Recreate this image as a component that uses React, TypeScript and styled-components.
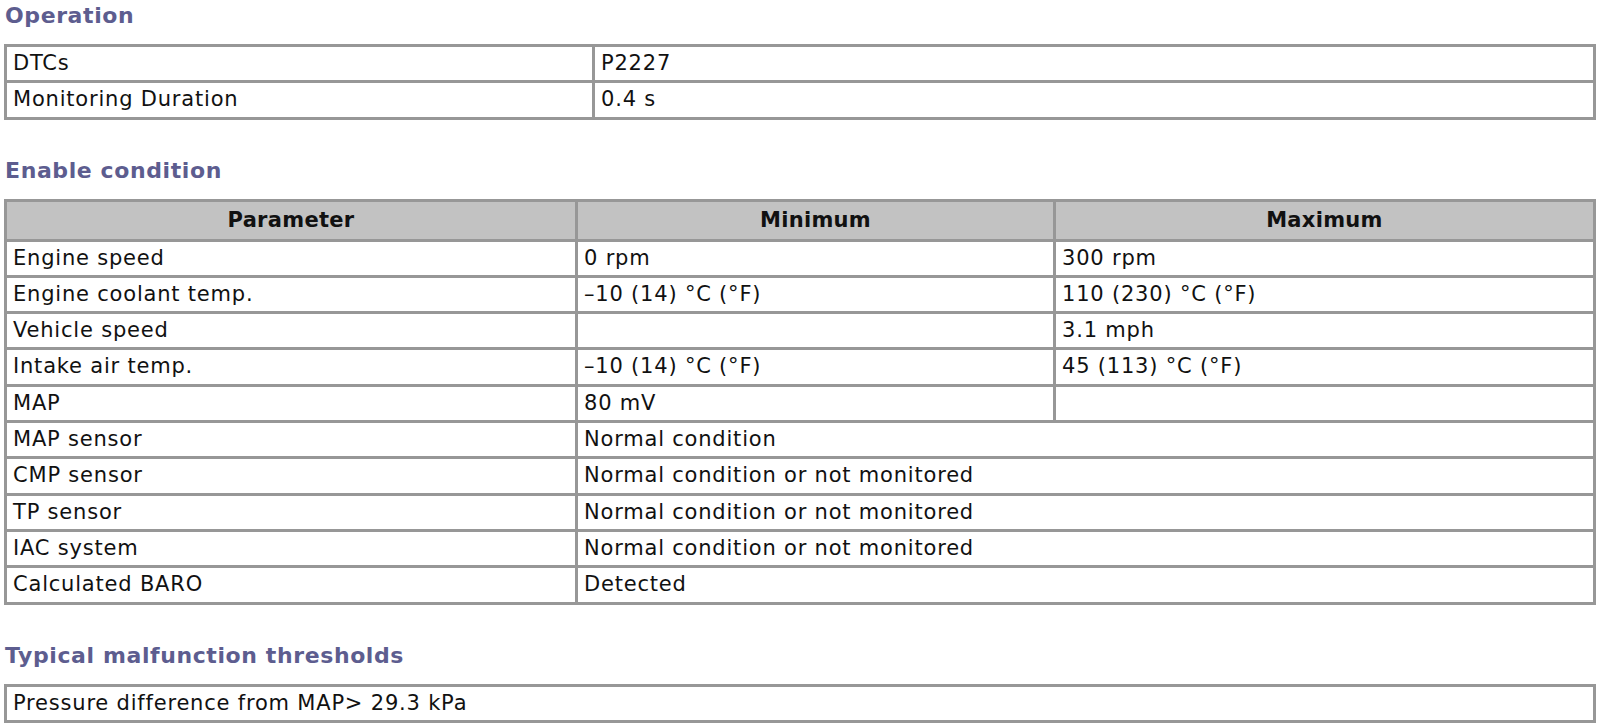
import React from "react";
import styled, { createGlobalStyle } from "styled-components";

const Global = createGlobalStyle`
  html, body { margin: 0; padding: 0; background: #ffffff; }
  body { font-family: "DejaVu Sans", Verdana, sans-serif; color: #000; }
`;

const Page = styled.div`
  padding: 4px 4px 0 4px;
`;

const Section = styled.section`
  & + & { margin-top: 39px; }
`;

const Heading = styled.h2`
  margin: 0 0 16px 1px;
  height: 24px;
  line-height: 24px;
  font-size: 22px;
  font-weight: bold;
  letter-spacing: 0.6px;
  color: #5d5d8f;
`;

const Table = styled.table`
  width: 1592px;
  border-collapse: collapse;
  table-layout: fixed;
  border: 3px solid #979797;
`;

const Cell = styled.td`
  border: 3px solid #979797;
  padding: 0 6px;
  height: 33.3px;
  line-height: 33.3px;
  font-size: 21px;
  letter-spacing: 0.8px;
  color: #111;
  text-align: left;
  white-space: nowrap;
  overflow: hidden;
`;

const HeadCell = styled.th`
  border: 3px solid #979797;
  background: #c2c2c2;
  padding: 0 6px;
  height: 37px;
  line-height: 37px;
  font-size: 21px;
  font-weight: bold;
  letter-spacing: 0.3px;
  color: #111;
  text-align: center;
`;

const rows: { p: string; min?: string; max?: string; span?: string }[] = [
  { p: "Engine speed", min: "0 rpm", max: "300 rpm" },
  { p: "Engine coolant temp.", min: "–10 (14) °C (°F)", max: "110 (230) °C (°F)" },
  { p: "Vehicle speed", min: "", max: "3.1 mph" },
  { p: "Intake air temp.", min: "–10 (14) °C (°F)", max: "45 (113) °C (°F)" },
  { p: "MAP", min: "80 mV", max: "" },
  { p: "MAP sensor", span: "Normal condition" },
  { p: "CMP sensor", span: "Normal condition or not monitored" },
  { p: "TP sensor", span: "Normal condition or not monitored" },
  { p: "IAC system", span: "Normal condition or not monitored" },
  { p: "Calculated BARO", span: "Detected" },
];

export default function App() {
  return (
    <Page>
      <Global />
      <Section>
        <Heading>Operation</Heading>
        <Table>
          <colgroup>
            <col style={{ width: 588 }} />
            <col />
          </colgroup>
          <tbody>
            <tr>
              <Cell>DTCs</Cell>
              <Cell>P2227</Cell>
            </tr>
            <tr>
              <Cell>Monitoring Duration</Cell>
              <Cell>0.4 s</Cell>
            </tr>
          </tbody>
        </Table>
      </Section>
      <Section>
        <Heading>Enable condition</Heading>
        <Table>
          <colgroup>
            <col style={{ width: 571 }} />
            <col style={{ width: 478 }} />
            <col />
          </colgroup>
          <thead>
            <tr>
              <HeadCell>Parameter</HeadCell>
              <HeadCell>Minimum</HeadCell>
              <HeadCell>Maximum</HeadCell>
            </tr>
          </thead>
          <tbody>
            {rows.map((r) => (
              <tr key={r.p}>
                <Cell>{r.p}</Cell>
                {r.span !== undefined ? (
                  <Cell colSpan={2}>{r.span}</Cell>
                ) : (
                  <>
                    <Cell>{r.min}</Cell>
                    <Cell>{r.max}</Cell>
                  </>
                )}
              </tr>
            ))}
          </tbody>
        </Table>
      </Section>
      <Section>
        <Heading>Typical malfunction thresholds</Heading>
        <Table>
          <tbody>
            <tr>
              <Cell>Pressure difference from MAP&gt; 29.3 kPa</Cell>
            </tr>
          </tbody>
        </Table>
      </Section>
    </Page>
  );
}
